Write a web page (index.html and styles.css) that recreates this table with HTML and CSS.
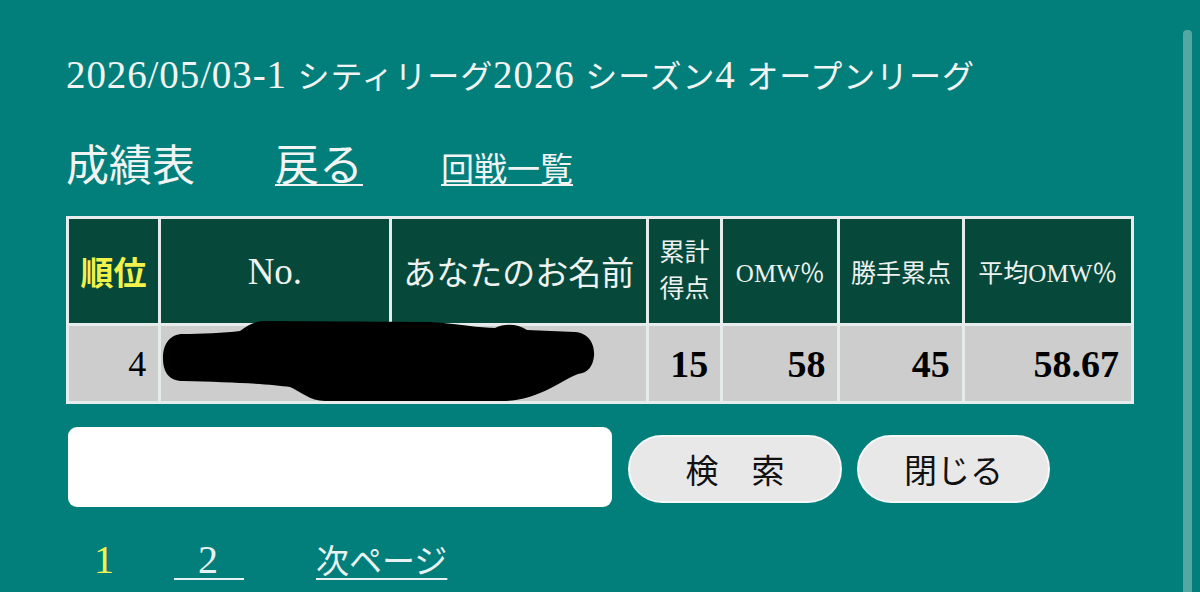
FILE: index.html
```html
<!DOCTYPE html>
<html lang="ja">
<head>
<meta charset="utf-8">
<title>成績表</title>
<link rel="stylesheet" href="styles.css">
</head>
<body>
<main class="page">
  <h1 class="title"><span class="lat">2026/05/03-1 </span>シティリーグ<span class="lat">2026 </span>シーズン<span class="lat">4 </span>オープンリーグ</h1>
  <div class="heading">
    <span class="heading-main">成績表</span>
    <a class="back" href="#">戻る</a>
    <a class="rounds" href="#">回戦一覧</a>
  </div>
  <div class="table-wrap">
    <table class="results">
      <colgroup>
        <col class="c1"><col class="c2"><col class="c3"><col class="c4"><col class="c5"><col class="c6"><col class="c7">
      </colgroup>
      <thead>
        <tr>
          <th class="rank">順位</th>
          <th class="big"><span class="lat-h">No.</span></th>
          <th class="big">あなたのお名前</th>
          <th class="small two">累計<br>得点</th>
          <th class="small">OMW％</th>
          <th class="small">勝手累点</th>
          <th class="small">平均OMW％</th>
        </tr>
      </thead>
      <tbody>
        <tr>
          <td class="num plain">4</td>
          <td></td>
          <td></td>
          <td class="num">15</td>
          <td class="num">58</td>
          <td class="num">45</td>
          <td class="num">58.67</td>
        </tr>
      </tbody>
    </table>
    <svg class="redact" viewBox="160 315 440 90" width="440" height="90" aria-hidden="true">
      <path d="M183 333 C200 333 225 332 240 330 C248 324 255 320 265 320 L430 321 C460 323 480 327 495 327 C505 322 518 323 527 329 L575 331 C590 332 595 345 594 355 C593 365 588 372 578 373 C565 378 555 386 540 392 C525 398 515 400 500 400 L325 400 C310 400 300 390 290 386 C270 383 230 381 183 380 C168 380 163 370 163 357 C163 343 170 333 183 333 Z" fill="#000"/>
    </svg>
  </div>
  <form class="search" onsubmit="return false">
    <input class="search-input" type="text" aria-label="検索">
    <button class="btn btn-search" type="button">検　索</button>
    <button class="btn btn-close" type="button">閉じる</button>
  </form>
  <nav class="pager">
    <span class="current lat">1</span>
    <a class="page-link lat" href="#">&nbsp;&nbsp;2&nbsp;&nbsp;</a>
    <a class="page-next" href="#">次ページ</a>
  </nav>
</main>
<div class="scroll-thumb"></div>
</body>
</html>
```

FILE: styles.css
```css
html, body {
  margin: 0;
  padding: 0;
  height: 100%;
  overflow: hidden;
}

body {
  background: #037f7b;
  color: #f2f4f4;
  font-family: "Liberation Serif", "Noto Sans CJK JP", serif;
}

.page {
  padding: 53px 0 0 66px;
}

.title {
  margin: 0;
  font-weight: normal;
  font-size: 32px;
  line-height: 44px;
  letter-spacing: 0.9px;
  white-space: nowrap;
}

.title .lat {
  font-size: 39px;
}

.heading {
  display: flex;
  align-items: baseline;
  margin-top: 31px;
  height: 54px;
}

.heading-main {
  font-size: 43px;
}

.heading a {
  color: #f2f4f4;
  text-underline-offset: 3px;
  text-decoration-thickness: 2px;
}

.back {
  font-size: 44px;
  margin-left: 80px;
}

.rounds {
  font-size: 33px;
  margin-left: 78px;
}

.table-wrap {
  position: relative;
  margin-top: 32px;
  width: 1068px;
}

.results {
  border-collapse: separate;
  border-spacing: 3px;
  background: #e6ecec;
  table-layout: fixed;
  width: 1068px;
}

.c1 { width: 89px; }
.c2 { width: 227px; }
.c3 { width: 254px; }
.c4 { width: 71px; }
.c5 { width: 114px; }
.c6 { width: 121px; }
.c7 { width: 166px; }

.results th {
  background: #06493a;
  color: #eef2f0;
  font-weight: normal;
  height: 104px;
  padding: 0;
  text-align: center;
  vertical-align: middle;
  white-space: nowrap;
}

.results th.big {
  font-size: 33px;
}

.results th .lat-h {
  font-size: 37px;
}

.results th.small {
  font-size: 25px;
}

.results th.two {
  line-height: 36px;
}

.results th.rank {
  color: #f2f24a;
  font-weight: bold;
  font-size: 33px;
}

.results td {
  background: #cdcdcd;
  color: #000;
  height: 75px;
  padding: 0 12px 0 0;
  vertical-align: middle;
}

.results td.num {
  text-align: right;
  font-weight: bold;
  font-size: 38px;
}

.results td.num.plain {
  font-weight: normal;
  font-size: 36px;
}

.redact {
  position: absolute;
  left: 94px;
  top: 100px;
}

.search {
  display: flex;
  align-items: center;
  margin: 23px 0 0 2px;
}

.search-input {
  box-sizing: border-box;
  width: 544px;
  height: 80px;
  border: none;
  border-radius: 9px;
  background: #fff;
  margin: 0;
}

.btn {
  box-sizing: border-box;
  height: 68px;
  border: 2px solid #f4f8f8;
  border-radius: 34px;
  background: #e8e8e8;
  color: #111;
  font-family: "Noto Sans CJK JP", "Noto Sans", sans-serif;
  font-size: 33px;
  padding: 0;
  margin: 4px 0 0;
}

.btn-search {
  width: 214px;
  margin-left: 16px;
}

.btn-close {
  width: 193px;
  margin-left: 15px;
}

.pager {
  display: flex;
  align-items: baseline;
  margin-top: 28px;
  padding-left: 28px;
  font-size: 33px;
}

.pager .lat {
  font-size: 40px;
}

.current {
  color: #f2f24a;
}

.pager a {
  color: #e8f2f2;
  text-underline-offset: 5px;
  text-decoration-thickness: 2px;
}

.page-link {
  margin-left: 60px;
  letter-spacing: 2px;
}

.page-next {
  margin-left: 72px;
}

.scroll-thumb {
  position: fixed;
  right: 8px;
  top: 30px;
  bottom: 0;
  width: 9px;
  border-radius: 4px 4px 0 0;
  background: #55a7a4;
}
```
